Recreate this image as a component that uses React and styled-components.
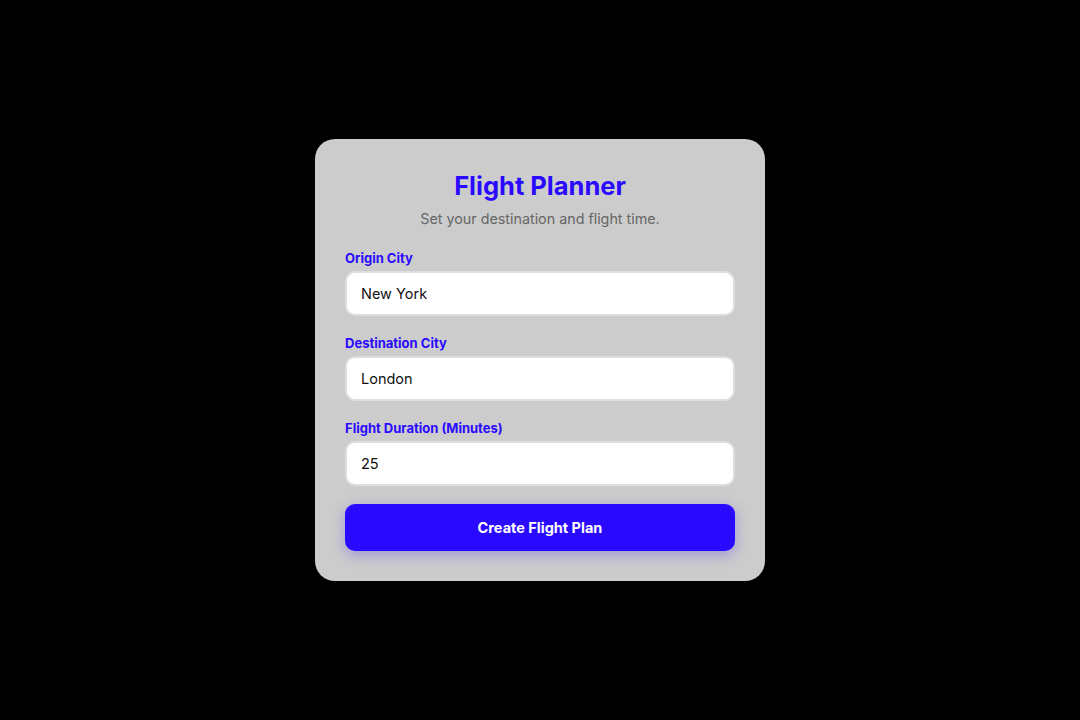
import React, { useState } from 'react'
import styled, { createGlobalStyle } from 'styled-components'

const blue = '#2a0aff'

const GlobalStyle = createGlobalStyle`
  html, body {
    margin: 0;
    padding: 0;
    background: #000;
  }
  body {
    font-family: Inter, "Noto Sans", sans-serif;
  }
`

const Page = styled.div`
  width: 100%;
  height: 720px;
  display: flex;
  align-items: center;
  justify-content: center;
`

const Card = styled.form`
  box-sizing: border-box;
  width: 450px;
  padding: 30px;
  background: #cccccc;
  border-radius: 20px;
  display: flex;
  flex-direction: column;
`

const Title = styled.h1`
  margin: 0 0 6px;
  font-size: 25.5px;
  line-height: 34px;
  font-weight: 700;
  color: ${blue};
  text-align: center;
`

const Subtitle = styled.p`
  margin: 0 0 21px;
  font-size: 14.3px;
  line-height: 20px;
  color: #666;
  text-align: center;
`

const Field = styled.div`
  display: flex;
  flex-direction: column;
  margin-bottom: 19px;
  &:last-of-type {
    margin-bottom: 18px;
  }
`

const Label = styled.label`
  font-size: 13px;
  line-height: 16px;
  font-weight: 700;
  color: ${blue};
  margin-bottom: 5px;
`

const Input = styled.input`
  box-sizing: border-box;
  height: 45px;
  padding: 0 14px;
  border: 2px solid #dedede;
  border-radius: 10px;
  background: #fff;
  font-family: Inter, "Noto Sans", sans-serif;
  font-size: 14.5px;
  color: #111;
  outline: none;
`

const Button = styled.button`
  height: 47px;
  border: none;
  border-radius: 10px;
  background: ${blue};
  color: #fff;
  font-family: Inter, "Noto Sans", sans-serif;
  font-size: 14.5px;
  font-weight: 700;
  cursor: pointer;
  box-shadow: 0 4px 14px rgba(42, 10, 255, 0.28);
`

const fields = [
  { id: 'origin', label: 'Origin City', value: 'New York' },
  { id: 'destination', label: 'Destination City', value: 'London' },
  { id: 'duration', label: 'Flight Duration (Minutes)', value: '25' },
]

export default function App() {
  const [values, setValues] = useState(
    Object.fromEntries(fields.map(f => [f.id, f.value]))
  )
  return (
    <>
      <GlobalStyle />
      <Page>
        <Card onSubmit={e => e.preventDefault()}>
          <Title>Flight Planner</Title>
          <Subtitle>Set your destination and flight time.</Subtitle>
          {fields.map(f => (
            <Field key={f.id}>
              <Label htmlFor={f.id}>{f.label}</Label>
              <Input
                id={f.id}
                value={values[f.id]}
                onChange={e => setValues({ ...values, [f.id]: e.target.value })}
              />
            </Field>
          ))}
          <Button type="submit">Create Flight Plan</Button>
        </Card>
      </Page>
    </>
  )
}
